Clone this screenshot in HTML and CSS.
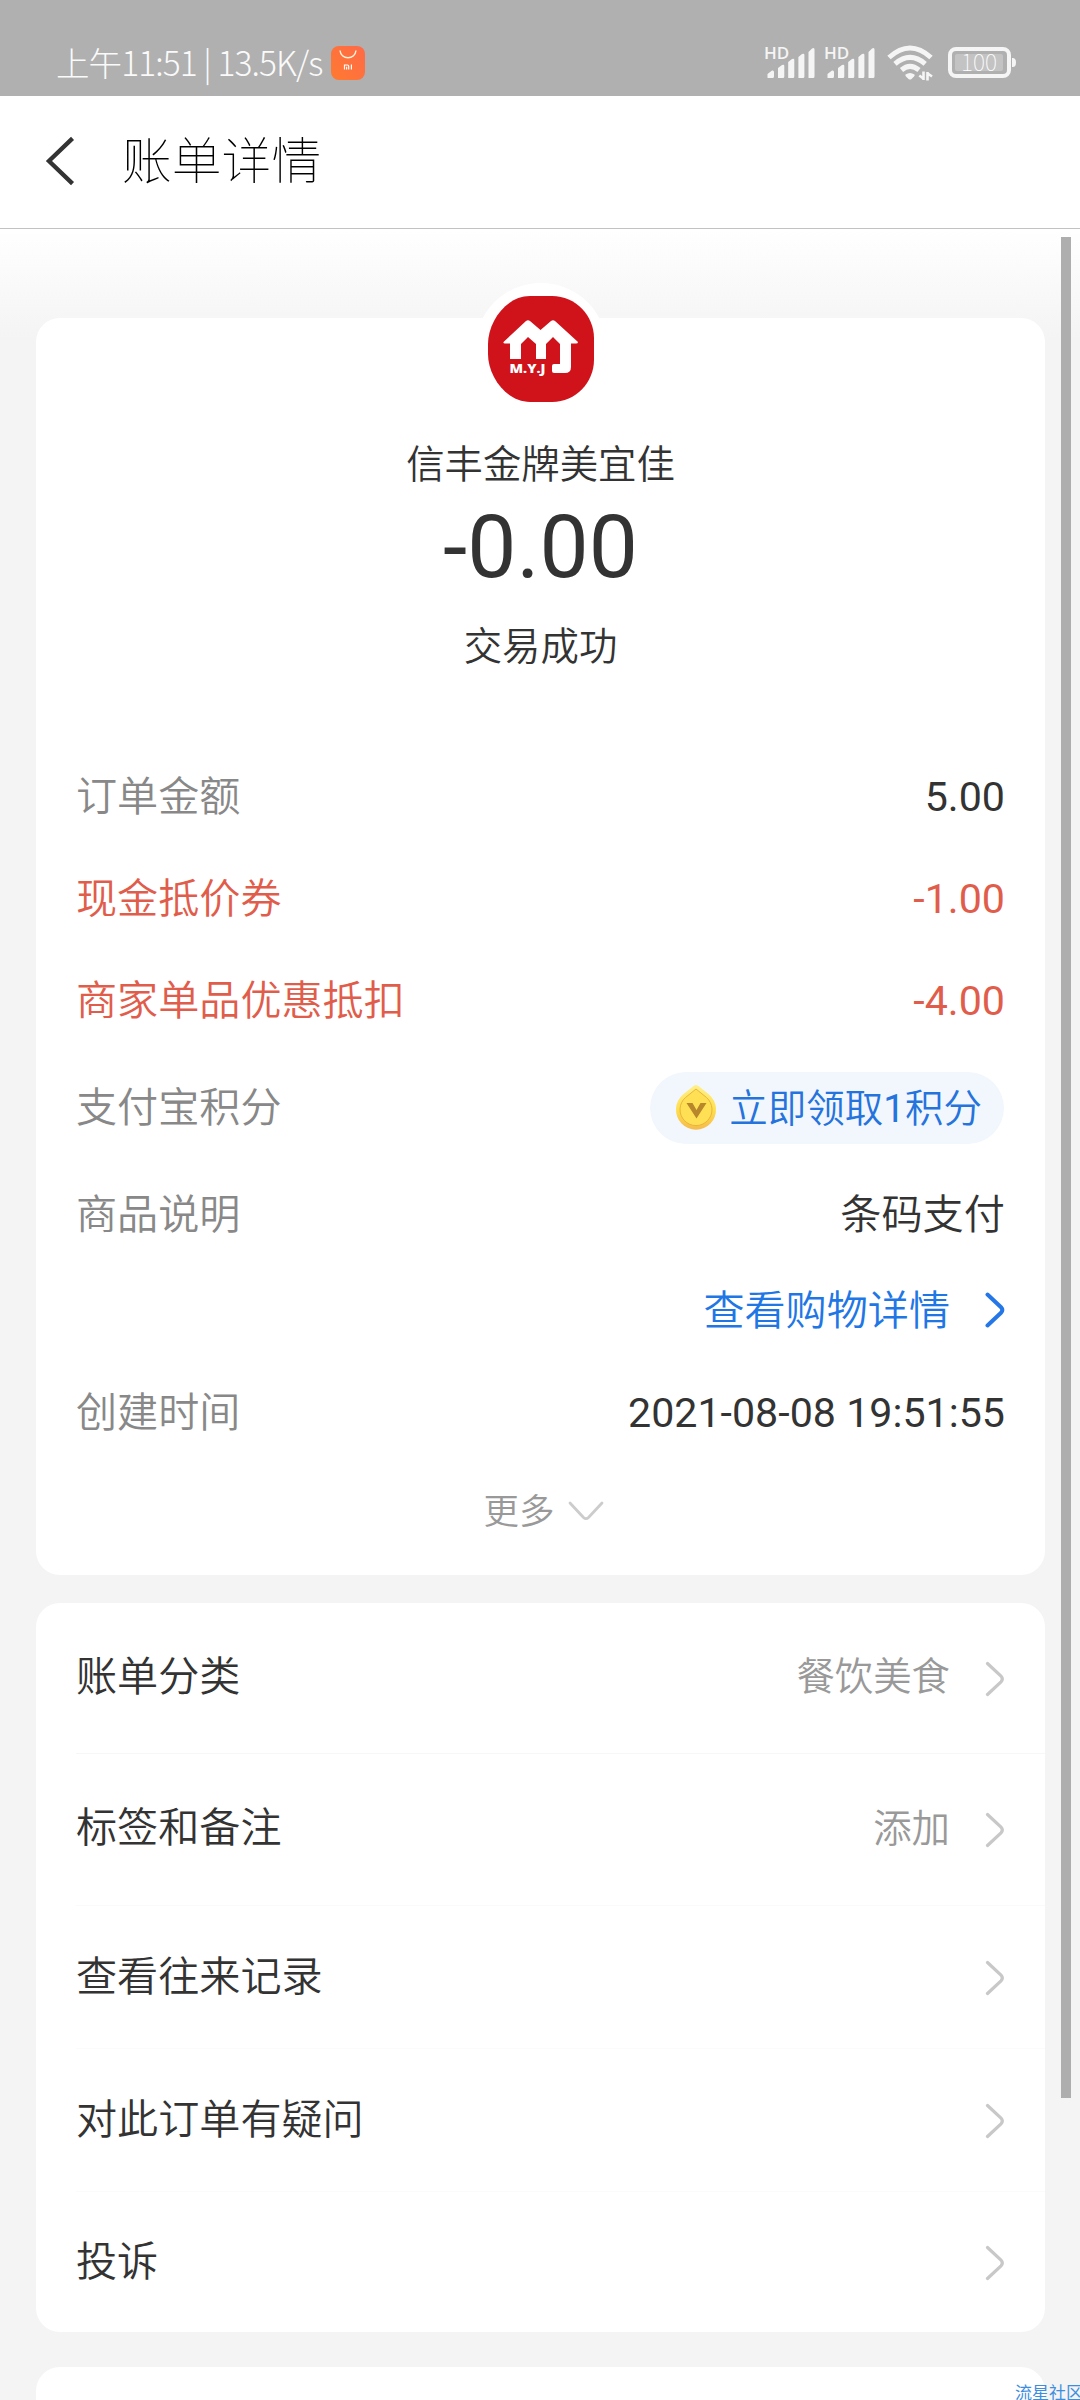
FILE: index.html
```html
<!DOCTYPE html>
<html lang="zh-CN">
<head>
<meta charset="utf-8">
<title>账单详情</title>
<link rel="stylesheet" href="styles.css">
</head>
<body>
<svg class="defs" width="0" height="0">
  <symbol id="chevron" viewBox="0 0 20 36"><path d="M2.500 2.500L16 15.200Q18.600 18 16 20.800L2.500 33.500" fill="none" stroke="currentColor" stroke-linecap="round"/></symbol>
  <symbol id="bars" viewBox="0 0 50 34">
    <path d="M2.500 31.500V28L7 24.600Q9 24 9 26V30.500Q9 32 7.500 32H3Q2.500 32 2.500 31.500ZM13 32V22L17 19Q19.300 18 19.300 20V30.500Q19.300 32 18 32ZM23.200 32V16L27 13Q29.300 12 29.300 14V30.500Q29.300 32 28 32ZM33.400 32V11L37 8Q39.400 7 39.400 9V30.500Q39.400 32 38 32ZM43.500 32V6L47 2.500Q49.500 1 49.500 3.500V30.500Q49.500 32 48 32Z"/>
  </symbol>
</svg>
<div class="screen">
  <header class="status">
    <span class="clock">上午11:51 | 13.5K/s</span>
    <svg class="store" viewBox="0 0 34 34">
      <defs><linearGradient id="og" x1="0" y1="1" x2="1" y2="0"><stop offset="0" stop-color="#ff7a30"/><stop offset="1" stop-color="#ff6a48"/></linearGradient></defs>
      <rect width="34" height="34" rx="8" fill="url(#og)"/>
      <path d="M9 4.500C10 14 24 14 25 4.500" fill="none" stroke="#fff3d8" stroke-width="1.500"/>
      <path d="M13.500 23.500V19H16.500Q17.700 19 17.700 20.200V23.500M15.600 20.800V23.500M20.400 18.500V23.500" fill="none" stroke="#fff" stroke-width="1.200"/>
    </svg>
    <div class="indicators">
      <svg class="signal" viewBox="0 0 50 34"><use href="#bars" width="50" height="34"/><text x="-1" y="12.600" class="hd">HD</text></svg>
      <svg class="signal" viewBox="0 0 50 34"><use href="#bars" width="50" height="34"/><text x="-1" y="12.600" class="hd">HD</text></svg>
      <svg class="wifi" viewBox="0 0 48 36">
        <g fill="none" stroke="#f5f5f5" stroke-width="5">
          <path d="M2 12.500Q23 -6.500 44 12.500"/><path d="M8 18.800Q23 6 38.200 18.800"/><path d="M14.500 25Q23 17.800 32 25"/>
        </g>
        <path d="M18.500 29.500Q23 26.500 27.500 29.500Q28 30.500 27 31.500L24.500 34Q23 35 21.500 34L19 31.500Q18 30.500 18.500 29.500Z" fill="#f5f5f5"/>
        <path d="M36.500 26.500V35M37 34L32.300 30.500M40.500 35.500V27M40 28L45 31.500" fill="none" stroke="#f5f5f5" stroke-width="2.600"/>
      </svg>
      <svg class="battery" viewBox="0 0 70 32">
        <rect x="2" y="2" width="59" height="27" rx="6" fill="none" stroke="#f5f5f5" stroke-width="4"/>
        <rect x="7" y="7" width="48" height="17" rx="2" fill="#c3c3c3"/>
        <path d="M64 11Q68 10.500 68 15.500T64 20Z" fill="#f5f5f5"/>
        <text x="31" y="24" text-anchor="middle" class="level">100</text>
      </svg>
    </div>
  </header>
  <nav class="titlebar">
    <svg class="back" viewBox="0 0 30 52"><path d="M27.500 2.500L3 26L27.500 49.500" fill="none" stroke="#333" stroke-width="4.500"/></svg>
    <h1>账单详情</h1>
  </nav>
  <main>
    <section class="card summary">
      <div class="logo">
        <svg viewBox="0 0 106 106">
          <path d="M42 0H64C88 0 106 20 106 42V64C106 86 88 106 64 106H42C18 106 0 80 0 58V48C0 26 18 0 42 0Z" fill="#d0121b"/>
          <path d="M15.500 46L38 25Q40 23.500 42 25L52.500 34L63 25Q65 23.500 67 25L90 46Q90 47.500 88 47.500H83V71Q83 77 77 77H66Q64 77 64 75V70Q64 68 66 68H72V48L65 41L58 48V63H48V48L40 41L33 48V63H22V47.500H17Q15 47.500 15.500 46Z" fill="#fff"/>
          <text x="21.500" y="76.500" textLength="36" lengthAdjust="spacingAndGlyphs" class="brand">M.Y.J</text>
        </svg>
      </div>
      <div class="merchant">信丰金牌美宜佳</div>
      <div class="amount">-0.00</div>
      <div class="state">交易成功</div>
      <dl class="details">
        <div class="row"><dt>订单金额</dt><dd>5.00</dd></div>
        <div class="row discount"><dt>现金抵价券</dt><dd>-1.00</dd></div>
        <div class="row discount"><dt>商家单品优惠抵扣</dt><dd>-4.00</dd></div>
        <div class="row points"><dt>支付宝积分</dt><dd class="pill">
          <svg class="coin" viewBox="0 0 42 46">
            <defs><linearGradient id="gold" x1="0" y1="0" x2="0" y2="1"><stop offset="0" stop-color="#fff08a"/><stop offset=".55" stop-color="#ffdf4d"/><stop offset="1" stop-color="#f5bb4b"/></linearGradient></defs>
            <path d="M18.500 2Q21 0 23.500 2L34 10.500A20 20 0 1 1 8 10.500Z" fill="url(#gold)"/>
            <path d="M21 5L31.500 13.500A16 16 0 1 1 10.500 13.500Z" fill="#ffe054" stroke="#eab43a" stroke-width="1"/>
            <path d="M11.500 19H17.500L21.500 26L25.500 19H31.500L21.500 34.500Z" fill="#b8862b"/>
          </svg><span>立即领取<b>1</b>积分</span></dd></div>
        <div class="row"><dt>商品说明</dt><dd class="text">条码支付</dd></div>
        <div class="row link"><dd class="text">查看购物详情</dd><svg class="chev"><use href="#chevron"/></svg></div>
        <div class="row created"><dt>创建时间</dt><dd>2021-08-08 19:51:55</dd></div>
      </dl>
      <div class="more"><span>更多</span><svg viewBox="0 0 36 20"><path d="M2 2L15.500 16.500Q18 18.800 20.500 16.500L34 2" fill="none" stroke="#ccc" stroke-width="2.800" stroke-linecap="round"/></svg></div>
    </section>
    <section class="card menu">
      <div class="item tall"><span>账单分类</span><em>餐饮美食</em><svg class="chev"><use href="#chevron"/></svg></div>
      <div class="item tall"><span>标签和备注</span><em>添加</em><svg class="chev"><use href="#chevron"/></svg></div>
      <div class="item"><span>查看往来记录</span><svg class="chev"><use href="#chevron"/></svg></div>
      <div class="item"><span>对此订单有疑问</span><svg class="chev"><use href="#chevron"/></svg></div>
      <div class="item"><span>投诉</span><svg class="chev"><use href="#chevron"/></svg></div>
    </section>
    <section class="card next"></section>
  </main>
  <div class="scrollbar"></div>
  <div class="watermark">流星社区</div>
</div>
</body>
</html>
```
FILE: styles.css
```css
* { box-sizing: border-box; }
body {
  margin: 0;
  font-family: Roboto, "Noto Sans CJK SC", sans-serif;
  color: #333;
}
h1, dl, dt, dd { margin: 0; font-weight: inherit; }
em { font-style: normal; }
b { font-weight: 400; }
svg { flex: none; display: block; overflow: visible; }
.defs { position: absolute; }
.screen {
  position: relative;
  width: 1080px;
  height: 2400px;
  overflow: hidden;
  background: #f4f4f4;
  display: flex;
  flex-direction: column;
}

/* status bar */
.status {
  height: 96px;
  flex: none;
  padding: 30px 62px 0 56px;
  display: flex;
  align-items: center;
  background: #b0b0b0;
  color: #fafafa;
}
.clock {
  font: 200 33.500px/60px "Noto Sans CJK SC", sans-serif;
  letter-spacing: -0.900px;
  white-space: pre;
  width: 275px;
  margin-top: -2px;
}
.store { width: 34px; height: 34px; }
.indicators { margin-left: auto; display: flex; align-items: center; }
.signal { width: 50px; height: 34px; margin-right: 10px; fill: #f5f5f5; }
.hd { font: 600 17px "Open Sans", sans-serif; }
.wifi { width: 48px; height: 36px; margin: 0 13px 0 2px; }
.battery { width: 70px; height: 32px; }
.level { font: 100 23px "Noto Sans CJK SC", sans-serif; fill: #fff; }

/* title bar */
.titlebar {
  height: 133px;
  flex: none;
  padding: 0 46px;
  display: flex;
  align-items: center;
  gap: 47px;
  background: #fff;
  border-bottom: 1px solid #c2c2c2;
}
.back { width: 29px; height: 50px; margin-top: -2px; }
.titlebar h1 {
  font: 100 49.800px/70px "Noto Sans CJK SC", sans-serif;
  color: #000;
  margin-top: -10px;
}

main {
  flex: 1;
  padding: 89px 35px 0 36px;
  display: flex;
  flex-direction: column;
  background: linear-gradient(#fff, #f4f4f4 110px);
}
.card { flex: none; background: #fff; border-radius: 24px; }

/* bill summary */
.summary {
  height: 1257px;
  display: flex;
  flex-direction: column;
  align-items: center;
}
.logo {
  width: 132px;
  height: 132px;
  margin-top: -35px;
  padding: 13px;
  border-radius: 50%;
  background: #fff;
}
.logo svg { width: 106px; height: 106px; }
.brand { font: 900 12.500px "Open Sans", sans-serif; fill: #fff; }
.merchant, .state { font-size: 38.400px; line-height: 50px; font-weight: 350; }
.merchant { margin-top: 25px; }
.amount { font-size: 87.500px; line-height: 100px; margin-top: 7px; }
.state { margin-top: 25px; }
.details { width: 100%; padding: 0 40px; margin-top: 74px; }
.row {
  height: 102px;
  display: flex;
  align-items: center;
  justify-content: space-between;
  font-size: 41.100px;
  line-height: 60px;
}
.row dt { color: #888; font-weight: 350; }
.row dd { font-size: 41.200px; }
.row .text { font-weight: 350; }
.discount, .row.discount dt { color: #e15d4b; }
.points { height: 112px; }
.row .pill {
  display: flex;
  align-items: center;
  gap: 12px;
  height: 72px;
  margin-right: 1px;
  padding: 0 22px 0 25px;
  border-radius: 36px;
  background: #f2f7fe;
  color: #2573dc;
  font-size: 38.500px;
  font-weight: 350;
}
.pill span { margin-top: 1px; }
.coin { width: 42px; height: 46px; margin-bottom: 2px; }
.link { height: 90px; justify-content: flex-end; gap: 35px; color: #1f76e5; }
.row.link dd { font-size: 41.100px; }
.chev { width: 20px; height: 36px; stroke-width: 3.200px; color: #c8c8c8; }
.link .chev { color: #2577e8; stroke-width: 4px; margin-top: -2px; }
.created { height: 114px; }
.more {
  height: 77px;
  display: flex;
  align-items: center;
  gap: 13px;
  margin-left: 6px;
  font-size: 35.500px;
  font-weight: 350;
  color: #999;
}
.more svg { width: 36px; height: 20px; margin-top: 4px; }

/* actions */
.menu { margin-top: 28px; height: 729px; }
.item {
  height: 143px;
  margin-left: 40px;
  padding-right: 40px;
  display: flex;
  align-items: center;
  gap: 35px;
  font-size: 41.100px;
  font-weight: 350;
  line-height: 60px;
  border-bottom: 1px solid #fbfbfb;
}
.item.tall { height: 151px; border-color: #f7f7f7; }
.item.tall + .item.tall { height: 152px; border-color: #fafafa; }
.item:last-child { height: 140px; border: 0; }
.item span { flex: 1; }
.item.tall span { margin-top: -3px; }
.item.tall em { margin-top: -2px; }
.item em { font-size: 38.400px; color: #999; }
.item .chev { margin-top: 2px; }
.item.tall .chev { margin-top: 1px; }
.next { margin-top: 35px; height: 60px; }

.scrollbar {
  position: absolute;
  left: 1061px;
  top: 237px;
  width: 10px;
  height: 1861px;
  background: #aeaeae;
}
.watermark {
  position: absolute;
  left: 1015px;
  top: 2380px;
  font: 400 17px/24px "Noto Sans CJK SC", sans-serif;
  color: #3d8ee0;
  white-space: nowrap;
}
```
